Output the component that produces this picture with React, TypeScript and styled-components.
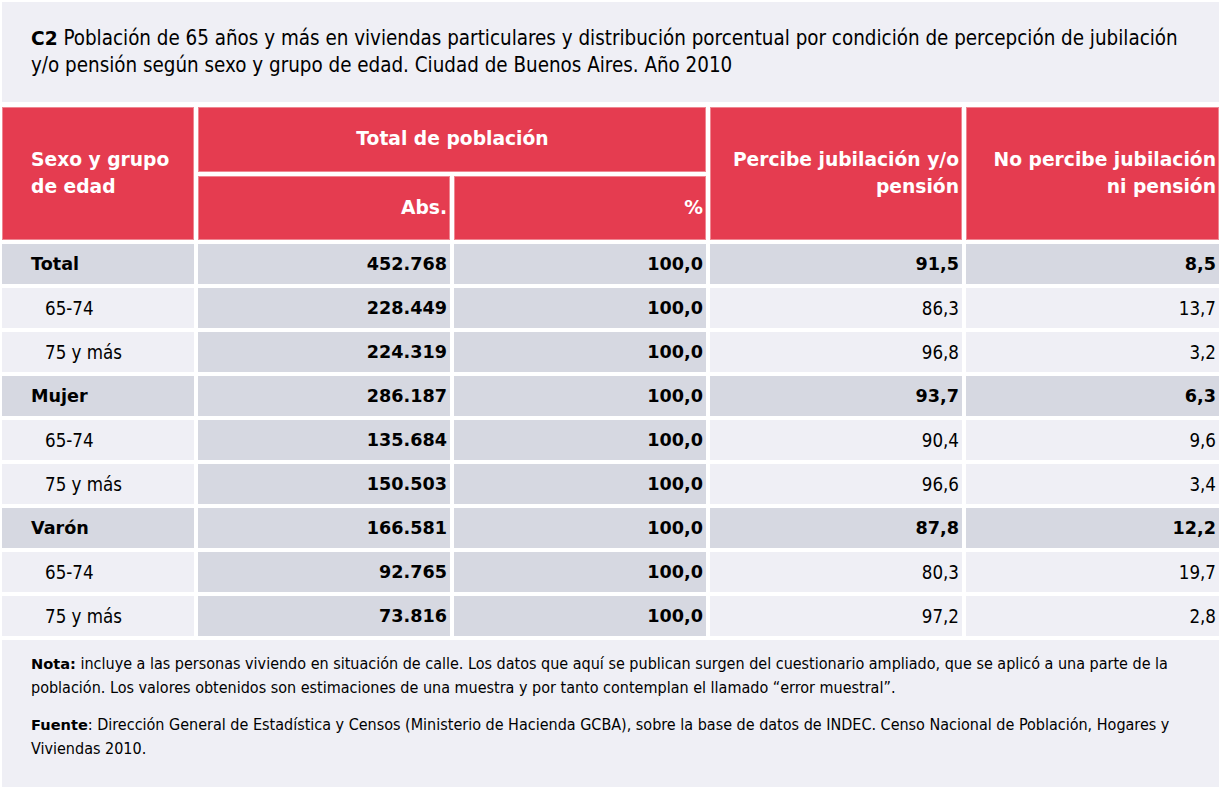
import React from "react";
import styled, { createGlobalStyle } from "styled-components";

const COND = `"DejaVu Sans Condensed", "DejaVu Sans", sans-serif`;
const WIDE = `"DejaVu Sans", "DejaVu Sans Condensed", sans-serif`;

const Global = createGlobalStyle`
  html, body { margin: 0; padding: 0; background: #ffffff; }
  body { font-family: ${COND}; color: #000; }
`;

const Page = styled.div`
  width: 1217px;
  padding: 2px 4px 4px 2px;
  display: flex;
  flex-direction: column;
  gap: 5px;
`;

const TitleBox = styled.div`
  background: #efeff5;
  padding: 23px 28px 24px 29px;
  font-family: ${COND};
  font-size: 20.4px;
  line-height: 26px;
`;

const TitleBold = styled.b`
  font-family: ${WIDE};
  font-size: 18.6px;
  font-weight: 700;
`;

const NoteBold = styled.b`
  font-family: ${WIDE};
  font-size: 14.6px;
  font-weight: 700;
`;

const Grid = styled.div`
  display: grid;
  grid-template-columns: 192px 252px 252px 252px 253px;
  grid-template-rows: 65px 64px repeat(9, 40px);
  gap: 4px;
`;

const HeadCell = styled.div<{ $align: "left" | "center" | "right"; $col: string; $row: string }>`
  grid-column: ${(p) => p.$col};
  grid-row: ${(p) => p.$row};
  background: #e53c50;
  box-shadow: inset 0 0 0 1px #ee8792;
  color: #ffffff;
  font-family: ${WIDE};
  font-weight: 700;
  font-size: 18.7px;
  line-height: 27px;
  display: flex;
  align-items: center;
  justify-content: ${(p) => (p.$align === "left" ? "flex-start" : p.$align === "center" ? "center" : "flex-end")};
  text-align: ${(p) => p.$align};
  white-space: nowrap;
  padding: ${(p) => (p.$align === "left" ? "0 4px 2px 29px" : "0 3px 2px 4px")};
`;

const Cell = styled.div<{ $dark: boolean; $bold: boolean; $label?: boolean; $indent?: boolean }>`
  background: ${(p) => (p.$dark ? "#d6d8e1" : "#efeff5")};
  font-family: ${(p) => (p.$bold ? WIDE : COND)};
  font-size: ${(p) => (p.$bold ? "17.6px" : "18.6px")};
  font-weight: ${(p) => (p.$bold ? 700 : 400)};
  display: flex;
  align-items: center;
  justify-content: ${(p) => (p.$label ? "flex-start" : "flex-end")};
  padding: ${(p) => (p.$label ? (p.$indent ? "0 4px 0 43px" : "0 4px 0 29px") : "0 3px 0 4px")};
`;

const NotesBox = styled.div`
  background: #efeff5;
  height: 147px;
  box-sizing: border-box;
  padding: 12px 22px 0 29px;
  font-family: ${COND};
  font-size: 16px;
  line-height: 24px;
  display: flex;
  flex-direction: column;
  gap: 13px;
  margin-top: -1px;
`;

const Para = styled.p`
  margin: 0;
`;

type Row = { label: string; group: boolean; abs: string; pct: string; si: string; no: string };

const rows: Row[] = [
  { label: "Total", group: true, abs: "452.768", pct: "100,0", si: "91,5", no: "8,5" },
  { label: "65-74", group: false, abs: "228.449", pct: "100,0", si: "86,3", no: "13,7" },
  { label: "75 y más", group: false, abs: "224.319", pct: "100,0", si: "96,8", no: "3,2" },
  { label: "Mujer", group: true, abs: "286.187", pct: "100,0", si: "93,7", no: "6,3" },
  { label: "65-74", group: false, abs: "135.684", pct: "100,0", si: "90,4", no: "9,6" },
  { label: "75 y más", group: false, abs: "150.503", pct: "100,0", si: "96,6", no: "3,4" },
  { label: "Varón", group: true, abs: "166.581", pct: "100,0", si: "87,8", no: "12,2" },
  { label: "65-74", group: false, abs: "92.765", pct: "100,0", si: "80,3", no: "19,7" },
  { label: "75 y más", group: false, abs: "73.816", pct: "100,0", si: "97,2", no: "2,8" },
];

export default function App() {
  return (
    <>
      <Global />
      <Page>
        <TitleBox>
          <TitleBold>C2</TitleBold> Población de 65 años y más en viviendas particulares y distribución porcentual por condición de percepción de jubilación y/o pensión según sexo y grupo de edad. Ciudad de Buenos Aires. Año 2010
        </TitleBox>
        <Grid>
          <HeadCell $align="left" $col="1" $row="1 / span 2">
            Sexo y grupo
            <br />
            de edad
          </HeadCell>
          <HeadCell $align="center" $col="2 / span 2" $row="1">
            Total de población
          </HeadCell>
          <HeadCell $align="right" $col="2" $row="2">
            Abs.
          </HeadCell>
          <HeadCell $align="right" $col="3" $row="2">
            %
          </HeadCell>
          <HeadCell $align="right" $col="4" $row="1 / span 2">
            Percibe jubilación y/o
            <br />
            pensión
          </HeadCell>
          <HeadCell $align="right" $col="5" $row="1 / span 2">
            No percibe jubilación
            <br />
            ni pensión
          </HeadCell>
          {rows.map((r, i) => (
            <React.Fragment key={i}>
              <Cell $dark={r.group} $bold={r.group} $label $indent={!r.group}>
                {r.label}
              </Cell>
              <Cell $dark $bold>
                {r.abs}
              </Cell>
              <Cell $dark $bold>
                {r.pct}
              </Cell>
              <Cell $dark={r.group} $bold={r.group}>
                {r.si}
              </Cell>
              <Cell $dark={r.group} $bold={r.group}>
                {r.no}
              </Cell>
            </React.Fragment>
          ))}
        </Grid>
        <NotesBox>
          <Para>
            <NoteBold>Nota:</NoteBold> incluye a las personas viviendo en situación de calle. Los datos que aquí se publican surgen del cuestionario ampliado, que se aplicó a una parte de la población. Los valores obtenidos son estimaciones de una muestra y por tanto contemplan el llamado “error muestral”.
          </Para>
          <Para>
            <NoteBold>Fuente</NoteBold>: Dirección General de Estadística y Censos (Ministerio de Hacienda GCBA), sobre la base de datos de INDEC. Censo Nacional de Población, Hogares y Viviendas 2010.
          </Para>
        </NotesBox>
      </Page>
    </>
  );
}
